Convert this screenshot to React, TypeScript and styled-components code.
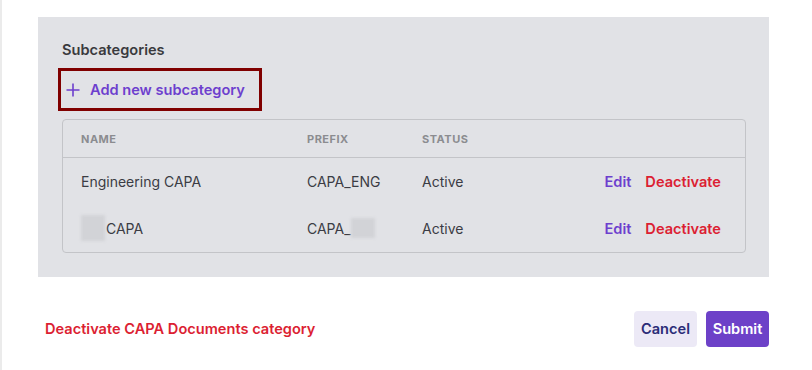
import React from "react";
import styled, { createGlobalStyle } from "styled-components";

const Global = createGlobalStyle`
  html, body { margin: 0; padding: 0; background: #ffffff; }
  body { font-family: Inter, "Noto Sans", Arial, sans-serif; -webkit-font-smoothing: antialiased; }
  * { box-sizing: border-box; }
`;

const Page = styled.div`
  min-height: 370px;
  border-left: 2px solid #ebebeb;
  padding: 17px 43px 0 36px;
`;

const Panel = styled.section`
  background: #e1e2e6;
  padding: 23px 23px 24px 24px;
  display: flex;
  flex-direction: column;
`;

const Heading = styled.h3`
  margin: 0;
  font-size: 14.6px;
  line-height: 20px;
  font-weight: 600;
  color: #3a3a3e;
`;

const AddButton = styled.button`
  margin-top: 8px;
  align-self: flex-start;
  margin-left: -4px;
  display: flex;
  align-items: center;
  gap: 10px;
  height: 43px;
  width: 204px;
  padding: 0 0 0 5px;
  border: 3px solid #800000;
  background: transparent;
  font-family: inherit;
  font-size: 14.6px;
  font-weight: 600;
  color: #6d3fce;
  cursor: pointer;
  white-space: nowrap;
`;

const Table = styled.div`
  margin-top: 8px;
  border: 1px solid #c3c4c8;
  border-radius: 4px;
`;

const Row = styled.div<{ $head?: boolean }>`
  display: grid;
  grid-template-columns: 226px 115px 1fr auto;
  align-items: center;
  height: ${(p) => (p.$head ? "38px" : "47px")};
  padding: 0 24px 0 18px;
  border-bottom: ${(p) => (p.$head ? "1px solid #c3c4c8" : "none")};
`;

const HeadCell = styled.div`
  font-size: 11px;
  font-weight: 700;
  letter-spacing: 0.5px;
  text-transform: uppercase;
  color: #8b8c90;
`;

const Cell = styled.div`
  display: flex;
  align-items: center;
  font-size: 14px;
  color: #3b3c44;
  margin-top: -1px;
`;

const Blur = styled.span<{ $h: number }>`
  display: inline-block;
  width: 24px;
  height: ${(p) => p.$h}px;
  background: #d2d3d7;
  filter: blur(1.5px);
  margin-right: 1px;
`;

const Actions = styled.div`
  display: flex;
  gap: 14px;
`;

const LinkButton = styled.button<{ $danger?: boolean }>`
  border: none;
  background: none;
  padding: 0;
  font-family: inherit;
  font-size: 14.6px;
  font-weight: 600;
  color: ${(p) => (p.$danger ? "#dc1f33" : "#6d3fce")};
  cursor: pointer;
`;

const Footer = styled.div`
  margin-top: 34px;
  display: flex;
  align-items: center;
  justify-content: space-between;
  padding-left: 7px;
`;

const DangerText = styled(LinkButton)``;

const ButtonGroup = styled.div`
  display: flex;
  gap: 9px;
`;

const Button = styled.button<{ $primary?: boolean }>`
  height: 36px;
  width: 63px;
  padding: 0;
  border: none;
  border-radius: 4px;
  font-family: inherit;
  font-size: 14.6px;
  font-weight: 600;
  background: ${(p) => (p.$primary ? "#6d41c8" : "#ece9f6")};
  color: ${(p) => (p.$primary ? "#ffffff" : "#2b2d78")};
  cursor: pointer;
`;

const Plus = () => (
  <svg width="14" height="14" viewBox="0 0 14 14" fill="none" stroke="#6d3fce" strokeWidth="1.6">
    <path d="M7 0.5v13M0.5 7h13" />
  </svg>
);

const rows = [
  { name: "Engineering CAPA", prefix: "CAPA_ENG", blurName: false },
  { name: "CAPA", prefix: "CAPA_", blurName: true },
];

export default function App() {
  return (
    <>
      <Global />
      <Page>
        <Panel>
          <Heading>Subcategories</Heading>
          <AddButton>
            <Plus />
            Add new subcategory
          </AddButton>
          <Table>
            <Row $head>
              <HeadCell>Name</HeadCell>
              <HeadCell>Prefix</HeadCell>
              <HeadCell>Status</HeadCell>
              <div />
            </Row>
            {rows.map((r) => (
              <Row key={r.name + r.prefix}>
                <Cell>
                  {r.blurName && <Blur $h={26} />}
                  {r.name}
                </Cell>
                <Cell>
                  {r.prefix}
                  {r.blurName && <Blur $h={20} />}
                </Cell>
                <Cell>Active</Cell>
                <Actions>
                  <LinkButton>Edit</LinkButton>
                  <LinkButton $danger>Deactivate</LinkButton>
                </Actions>
              </Row>
            ))}
          </Table>
        </Panel>
        <Footer>
          <DangerText $danger>Deactivate CAPA Documents category</DangerText>
          <ButtonGroup>
            <Button>Cancel</Button>
            <Button $primary>Submit</Button>
          </ButtonGroup>
        </Footer>
      </Page>
    </>
  );
}
